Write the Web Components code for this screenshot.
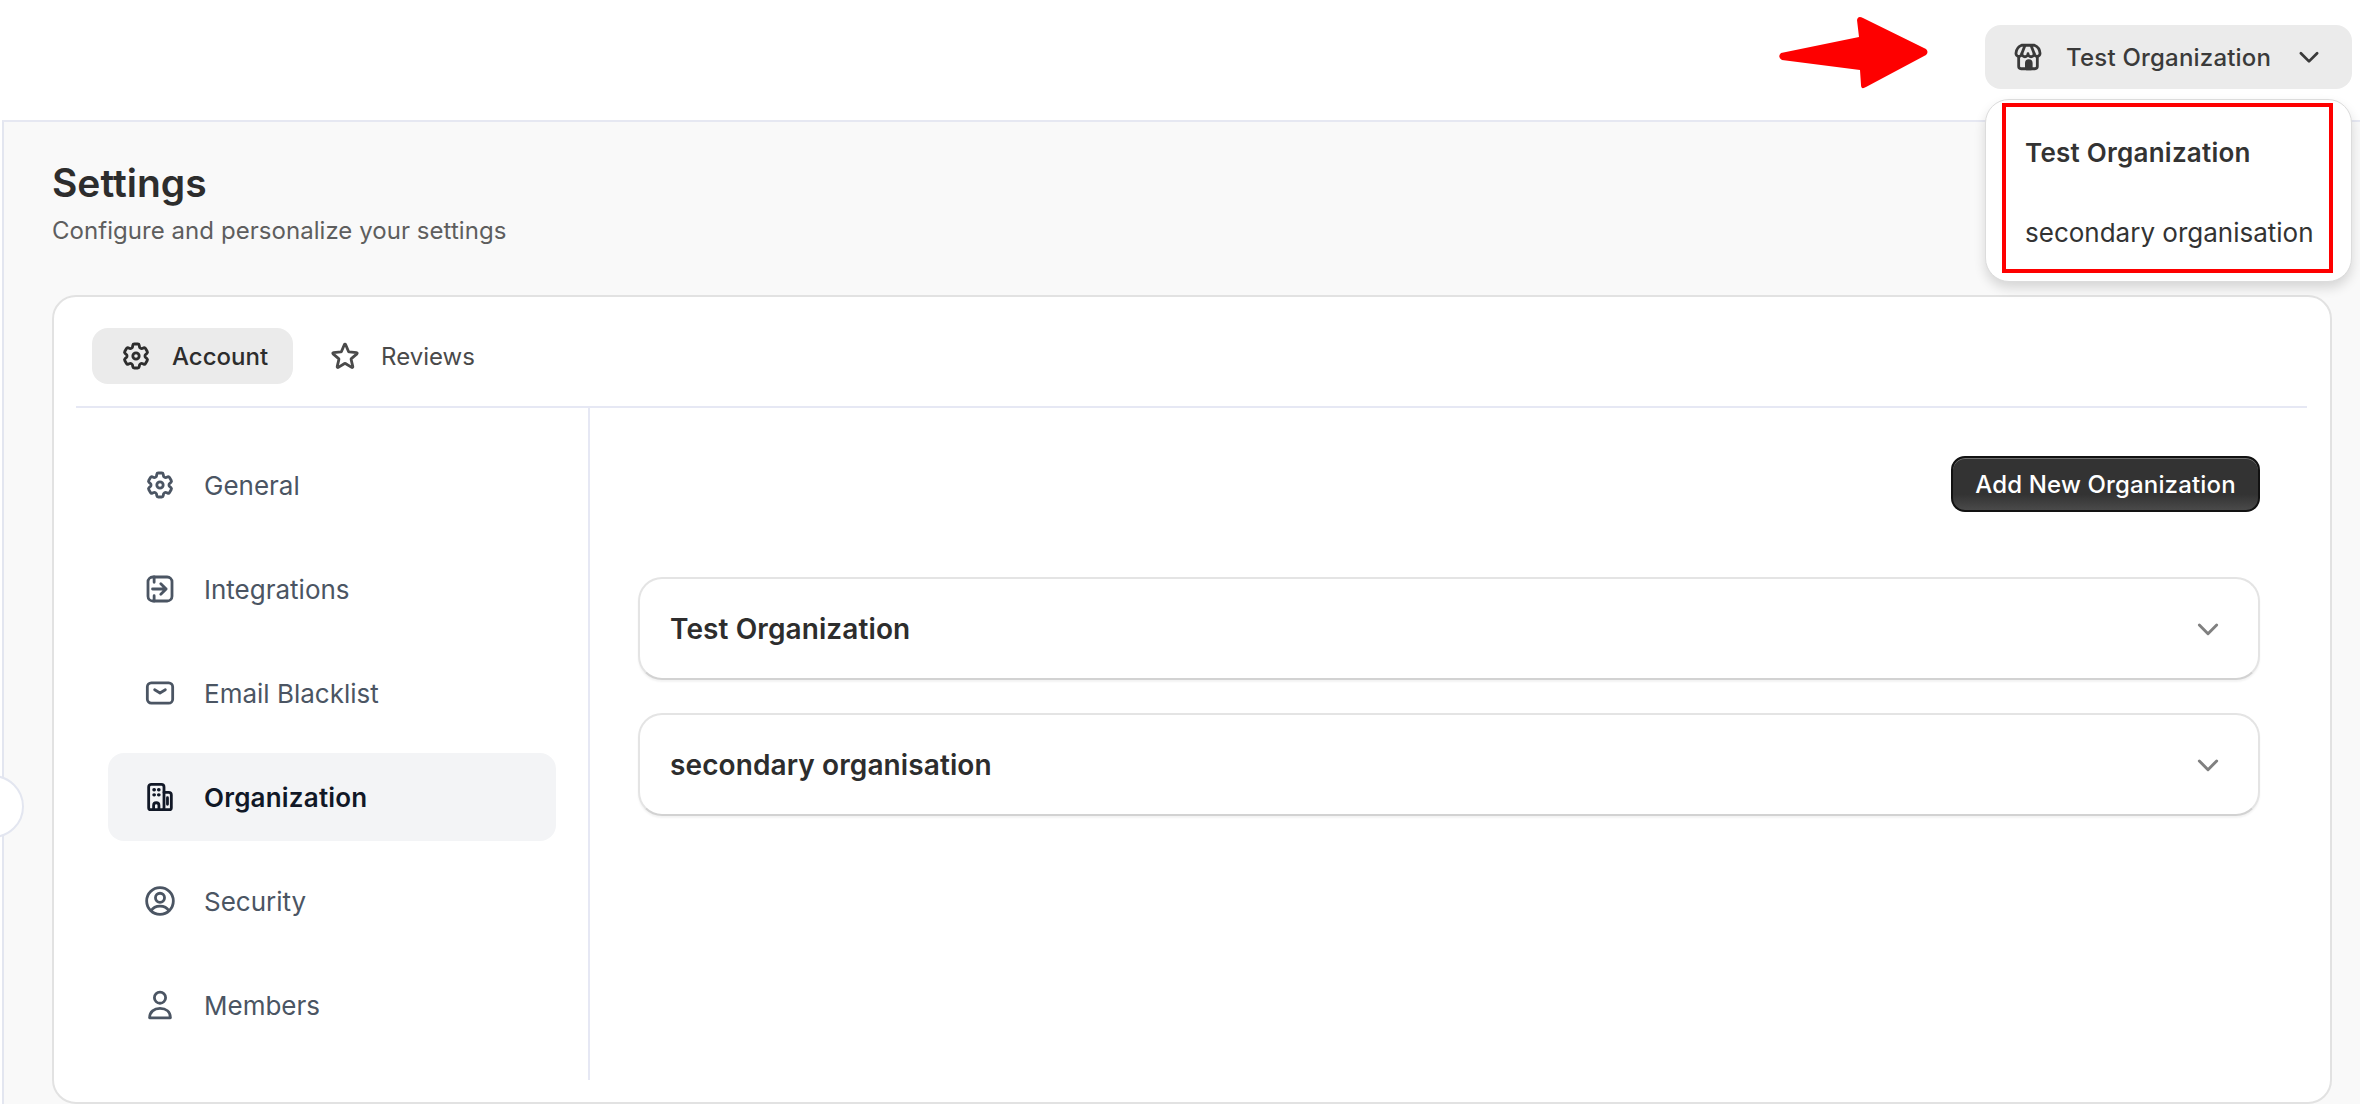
<!DOCTYPE html>
<html lang="en"><head><meta charset="utf-8"><title>Settings</title>
<style>
html,body{margin:0;padding:0;background:#fff;font-family:Inter,"Liberation Sans",sans-serif;}
</style></head>
<body>
<app-root>
  <top-bar>
    <org-switcher label="Test Organization">
      <org-option selected>Test Organization</org-option>
      <org-option>secondary organisation</org-option>
    </org-switcher>
  </top-bar>
  <settings-page heading="Settings" sub="Configure and personalize your settings">
    <tab-bar>
      <tab-item icon="cog" active>Account</tab-item>
      <tab-item icon="star">Reviews</tab-item>
    </tab-bar>
    <side-nav slot="nav">
      <nav-item icon="cog">General</nav-item>
      <nav-item icon="swap">Integrations</nav-item>
      <nav-item icon="mail">Email Blacklist</nav-item>
      <nav-item icon="building" active>Organization</nav-item>
      <nav-item icon="usercircle">Security</nav-item>
      <nav-item icon="user">Members</nav-item>
    </side-nav>
    <org-panel slot="panel">
      <org-accordion>Test Organization</org-accordion>
      <org-accordion>secondary organisation</org-accordion>
    </org-panel>
  </settings-page>
  <red-notes></red-notes>
</app-root>
<script>
const ICONS={
cog:'<path d="M9.594 3.94c.09-.542.56-.94 1.11-.94h2.593c.55 0 1.02.398 1.11.94l.213 1.281c.063.374.313.686.645.87.074.04.147.083.22.127.325.196.72.257 1.075.124l1.217-.456a1.125 1.125 0 0 1 1.37.49l1.296 2.247a1.125 1.125 0 0 1-.26 1.431l-1.003.827c-.293.241-.438.613-.43.992a7.723 7.723 0 0 1 0 .255c-.008.378.137.75.43.991l1.004.827c.424.35.534.955.26 1.43l-1.298 2.247a1.125 1.125 0 0 1-1.369.491l-1.217-.456c-.355-.133-.75-.072-1.076.124a6.47 6.47 0 0 1-.22.128c-.331.183-.581.495-.644.869l-.213 1.281c-.09.543-.56.94-1.11.94h-2.594c-.55 0-1.019-.398-1.11-.94l-.213-1.281c-.062-.374-.312-.686-.644-.87a6.52 6.52 0 0 1-.22-.127c-.325-.196-.72-.257-1.076-.124l-1.217.456a1.125 1.125 0 0 1-1.369-.49l-1.297-2.247a1.125 1.125 0 0 1 .26-1.431l1.004-.827c.292-.24.437-.613.43-.991a6.932 6.932 0 0 1 0-.255c.007-.38-.138-.751-.43-.992l-1.004-.827a1.125 1.125 0 0 1-.26-1.43l1.297-2.247a1.125 1.125 0 0 1 1.37-.491l1.216.456c.356.133.751.072 1.076-.124.072-.044.146-.086.22-.128.332-.183.582-.495.644-.869l.214-1.28Z"/><circle cx="12" cy="12" r="2.4"/>',
star:'<path d="M11.48 3.499a.562.562 0 0 1 1.04 0l2.125 5.111a.563.563 0 0 0 .475.345l5.518.442c.499.04.701.663.321.988l-4.204 3.602a.563.563 0 0 0-.182.557l1.285 5.385a.562.562 0 0 1-.84.61l-4.725-2.885a.562.562 0 0 0-.586 0L6.982 20.54a.562.562 0 0 1-.84-.61l1.285-5.386a.562.562 0 0 0-.182-.557l-4.204-3.602a.563.563 0 0 1 .321-.988l5.518-.442a.563.563 0 0 0 .475-.345L11.48 3.5Z"/>',
swap:'<rect x="3" y="3" width="18" height="18" rx="3.6"/><path d="M7.6 3v4M7.6 17v4M6.4 12h10.2M12.6 8l4 4-4 4"/>',
mail:'<rect x="2.5" y="4.4" width="19" height="15.2" rx="3"/><path d="M8 9.6 12 12l4-2.4"/>',
building:'<path d="M3.5 20V4.5a2 2 0 0 1 2-2h7.5a2 2 0 0 1 2 2V20a1.5 1.5 0 0 1-1.5 1.5H5a1.5 1.5 0 0 1-1.5-1.5Z"/><path d="M15 8.5h3.5a2 2 0 0 1 2 2V20a1.5 1.5 0 0 1-1.5 1.5h-4M17.6 12.5v5"/><path d="M7.2 21.5v-3.2a2 2 0 0 1 4 0v3.2"/><path d="M7.5 6.6h.2M11 6.6h.2M7.5 10.4h.2M11 10.4h.2" stroke-width="2.6"/>',
usercircle:'<circle cx="12" cy="12" r="10"/><circle cx="12" cy="9.6" r="3.4"/><path d="M5.4 19.2C6.8 16.8 9.1 15.8 12 15.8s5.2 1 6.6 3.4"/>',
user:'<circle cx="12" cy="6.5" r="4.2"/><path d="M4.2 21.6c0-4.6 3.4-7 7.8-7s7.8 2.4 7.8 7Z"/>',
store:'<path d="M5 11.5v7.5a1.8 1.8 0 0 0 1.8 1.8h10.4A1.8 1.8 0 0 0 19 19v-7.5"/><path d="M7.2 3.2h9.6c2.4 1 4 3.3 4.2 5.9a2.2 2.2 0 0 1-4.4.4 2.3 2.3 0 0 1-4.6 0 2.3 2.3 0 0 1-4.6 0A2.2 2.2 0 0 1 3 9.1c.2-2.6 1.8-4.9 4.2-5.9Z"/><path d="M9.7 3.4 7.4 9.4M14.3 3.4l2.3 6"/><path d="M10.8 20.8v-4.3a1.8 1.8 0 0 1 3.6 0v4.3Z" fill="currentColor"/>',
chev:'<path d="m5.5 9 6.5 6.5L18.5 9"/>'
};
function def(name,css,html,init){
  customElements.define(name,class extends HTMLElement{
    constructor(){super();this.attachShadow({mode:'open'});}
    connectedCallback(){
      const h=typeof html==='function'?html(this):html;
      this.shadowRoot.innerHTML='<style>'+css+'</style>'+h;
      if(init)init(this);
    }
  });
}
def('x-icon',`:host{display:inline-flex;width:var(--s,30px);height:var(--s,30px);flex:none}svg{width:100%;height:100%;fill:none;stroke:currentColor;stroke-width:var(--w,2);stroke-linecap:round;stroke-linejoin:round}`,
  e=>`<svg viewBox="0 0 24 24">${ICONS[e.getAttribute('name')]||''}</svg>`);
def('app-root',`:host{display:flex;flex-direction:column;width:2360px;height:1104px;overflow:hidden;position:relative;background:#fff;font-family:Inter,"Liberation Sans",sans-serif}`,`<slot></slot>`);
def('top-bar',`:host{display:flex;justify-content:flex-end;align-items:flex-start;height:120px;padding:25px 8px 0 0;box-sizing:border-box;flex:none;position:relative;z-index:2}`,`<slot></slot>`);
def('org-switcher',`:host{display:block;position:relative;width:367px}
.btn{display:flex;align-items:center;height:64px;box-sizing:border-box;padding:0 28px 0 27px;border-radius:16px;background:#ebebeb;color:#3a3a3a;font-size:24px;font-weight:500;letter-spacing:.2px}
.btn x-icon{--s:32px;--w:2.1;margin-right:22px}
.btn span{flex:1;white-space:nowrap}
.btn .c{--s:30px;--w:2.2;margin:0}
.menu{position:absolute;top:74px;left:0;right:0;height:183px;box-sizing:border-box;background:#fff;border:1px solid #dcdcdc;border-radius:24px;box-shadow:0 6px 12px rgba(0,0,0,.14);padding:12px 0 0 39px;display:flex;flex-direction:column}`,
  e=>`<div class="btn"><x-icon name="store"></x-icon><span>${e.getAttribute('label')}</span><x-icon class="c" name="chev"></x-icon></div><div class="menu"><slot></slot></div>`);
def('org-option',`:host{display:flex;align-items:center;height:80px;flex:none;font-size:26px;color:#333;white-space:nowrap}:host([selected]){font-weight:600;letter-spacing:.25px}`,`<slot></slot>`);
def('settings-page',`:host{display:flex;flex-direction:column;flex:1;min-height:0;background:#f9f9f9;border-top:2px solid #e6e8f2;border-left:2px solid #e3e6f0;margin-left:2px;padding:0 28px 0 48px;box-sizing:border-box;position:relative}
h1{margin:0;padding-top:39px;font-size:39px;line-height:44px;font-weight:600;color:#2d2d2d}
p{margin:0;padding-top:12px;font-size:24px;line-height:28px;color:#5e5e5e;letter-spacing:.05px}
.card{flex:1;min-height:0;margin-top:50px;background:#fff;border:2px solid #e2e2e2;border-radius:24px;padding:0 23px 0 22px;display:flex;flex-direction:column;box-sizing:border-box}
.tabs{height:111px;flex:none;border-bottom:2px solid #e6e8f4;box-sizing:border-box}
.body{display:flex;height:672px;flex:none}`,
  e=>`<h1>${e.getAttribute('heading')}</h1><p>${e.getAttribute('sub')}</p><div class="card"><div class="tabs"><slot></slot></div><div class="body"><slot name="nav"></slot><slot name="panel"></slot></div></div><edge-tab></edge-tab>`);
def('edge-tab',`:host{position:absolute;left:-43px;top:653px;width:63px;height:63px;border-radius:50%;background:#fff;border:2px solid #e3e6f0;box-sizing:border-box;display:block}`,``);
def('tab-bar',`:host{display:flex;align-items:flex-start;gap:8px;padding:31px 0 0 16px}`,`<slot></slot>`);
def('tab-item',`:host{display:flex;align-items:center;height:56px;box-sizing:border-box;padding:0 25px 0 29px;border-radius:16px;color:#4a4a4a;font-size:24px;font-weight:400}
:host([active]){background:#ebebeb;color:#2d2d2d;font-weight:500}
x-icon{--s:32px;--w:2.1;margin-right:20px;margin-left:-1px}`,
  e=>`<x-icon name="${e.getAttribute('icon')}"></x-icon><slot></slot>`);
def('side-nav',`:host{display:flex;flex-direction:column;gap:16px;width:514px;height:672px;box-sizing:border-box;padding:33px 32px 0 32px;border-right:2px solid #e6e8f4;flex:none}`,`<slot></slot>`);
def('nav-item',`:host{display:flex;align-items:center;height:88px;flex:none;border-radius:16px;padding-left:36px;color:#4b5563;font-size:26px;white-space:nowrap}
:host([active]){background:#f3f4f6;color:#111827;font-weight:600;letter-spacing:.2px}
x-icon{--s:32px;--w:2.1;margin-right:28px}`,
  e=>`<x-icon name="${e.getAttribute('icon')}"></x-icon><slot></slot>`);
def('org-panel',`:host{display:flex;flex-direction:column;flex:1;min-width:0;padding:48px 47px 0 48px;box-sizing:border-box}
.act{display:flex;justify-content:flex-end;margin-bottom:65px}
.list{display:flex;flex-direction:column;gap:33px}`,
  `<div class="act"><dark-button>Add New Organization</dark-button></div><div class="list"><slot></slot></div>`);
def('dark-button',`:host{display:flex;align-items:center;justify-content:center;width:309px;height:56px;box-sizing:border-box;border-radius:14px;border:2px solid #121212;background:linear-gradient(#333 0,#333 70%,#4a4a4a 100%);box-shadow:inset 0 1px 0 #6f6f6f;color:#fff;font-size:24px;font-weight:500;letter-spacing:.15px;white-space:nowrap;padding-top:1px}`,`<slot></slot>`);
def('org-accordion',`:host{display:flex;align-items:center;justify-content:space-between;height:103px;box-sizing:border-box;border:2px solid #e4e4e4;border-bottom-color:#d2d2d2;border-radius:24px;padding:0 34px 0 30px;background:#fff;box-shadow:0 2px 2px rgba(0,0,0,.05);font-size:28px;font-weight:600;color:#2d2d2d;letter-spacing:.1px}
x-icon{--s:32px;--w:2.2;color:#808080}`,
  `<span><slot></slot></span><x-icon name="chev"></x-icon>`);
def('red-notes',`:host{position:absolute;inset:0;pointer-events:none;z-index:5;display:block}
.box{position:absolute;left:2002px;top:103px;width:331px;height:170px;box-sizing:border-box;border:4px solid #fe0000}
svg{position:absolute;left:1770px;top:10px}`,
  `<div class="box"></div><svg width="170" height="90" viewBox="1770 10 170 90"><path d="M1781 53 1859 37 1857 20Q1858 15 1863 18L1926 49Q1929 52 1926 55L1866 87Q1861 90 1861 85L1860 70 1782 60Q1777 57 1781 53Z" fill="#fe0000"/></svg>`);
</script>
</body></html>
